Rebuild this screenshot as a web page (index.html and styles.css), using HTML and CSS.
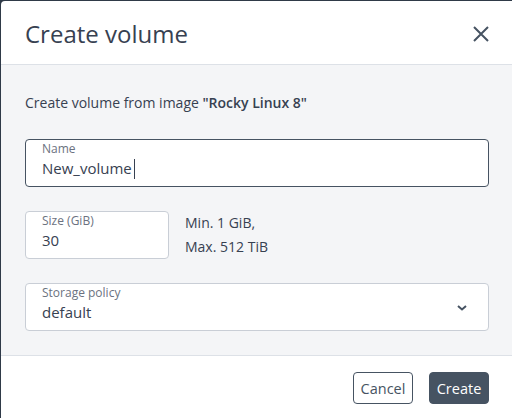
FILE: index.html
```html
<!DOCTYPE html>
<html>
<head>
  <meta charset="UTF-8">
  <title>Create volume</title>
  <link rel="stylesheet" href="styles.css">
</head>
<body>
  <div class="modal">
    <div class="modal-header">
      <h1 class="modal-title">Create volume</h1>
      <button class="close-btn" aria-label="Close">
        <svg width="16" height="16" viewBox="0 0 16 16">
          <path d="M1 1L15 15M15 1L1 15" stroke="#465362" stroke-width="2" fill="none"/>
        </svg>
      </button>
    </div>

    <div class="modal-body">
      <p class="intro">Create volume from image <b>"Rocky Linux 8"</b></p>

      <div class="field field-focused">
        <label class="field-label">Name</label>
        <div class="field-value">New_volume<span class="caret"></span></div>
      </div>

      <div class="size-row">
        <div class="field field-size">
          <label class="field-label">Size (GiB)</label>
          <div class="field-value">30</div>
        </div>
        <div class="hint">
          <div>Min. 1 GiB,</div>
          <div>Max. 512 TiB</div>
        </div>
      </div>

      <div class="field field-select">
        <div>
          <label class="field-label">Storage policy</label>
          <div class="field-value">default</div>
        </div>
        <svg class="chevron" width="10" height="6" viewBox="0 0 10 6">
          <path d="M1 1L5 4.5L9 1" stroke="#465362" stroke-width="2" fill="none"/>
        </svg>
      </div>
    </div>

    <div class="modal-footer">
      <button class="btn btn-outline">Cancel</button>
      <button class="btn btn-primary">Create</button>
    </div>
  </div>
</body>
</html>
```

FILE: styles.css
```css
html, body {
  margin:0; padding:0;
  height:100%;
  overflow:hidden;
}
body {
  background:#2f3a48;
  font-family:"Open Sans", "Noto Sans", sans-serif;
  color:#374151;
}
.modal {
  margin:1px 0 0 1px;
  width:512px;
  background:#fff;
  border-radius:4px 0 0 0;
}
.modal-header {
  display:flex;
  align-items:center;
  justify-content:space-between;
  padding:2px 24px 0 24px;
  box-sizing:border-box;
  border-bottom:1px solid #dde1e7;
  height:64px;
}
.modal-title {
  margin:0;
  font-size:24px;
  font-weight:400;
  color:#374151;
}
.close-btn {
  border:0; background:none; padding:0;
  width:16px; height:16px;
  display:flex;
  cursor:pointer;
}
.modal-body {
  background:#f4f5f7;
  padding:26px 24px 24px;
  border-bottom:1px solid #dde1e7;
}
.intro {
  margin:0 0 24px;
  font-size:14px;
  line-height:24px;
}
.intro b { font-weight:600; }
.field {
  height:48px;
  box-sizing:border-box;
  background:#fff;
  border:1px solid #c9ced6;
  border-radius:4px;
  padding:1px 16px 0;
}
.field-focused { border-color:#465362; }
.field-label {
  display:block;
  font-size:12px;
  line-height:16px;
  color:#6b7280;
}
.field-value {
  font-size:15px;
  line-height:22px;
  color:#374151;
}
.caret {
  display:inline-block;
  width:1px; height:20px;
  background:#374151;
  margin-left:2px;
  vertical-align:-5px;
}
.size-row {
  display:flex;
  margin:24px 0;
}
.field-size { width:144px; }
.hint {
  margin-left:16px;
  font-size:14px;
  line-height:24px;
}
.field-select {
  display:flex;
  align-items:flex-start;
  justify-content:space-between;
  padding-right:21px;
}
.chevron { align-self:center; }
.modal-footer {
  display:flex;
  justify-content:flex-end;
  gap:16px;
  padding:16px 24px;
}
.btn {
  width:60px;
  height:32px;
  padding:0;
  border-radius:4px;
  font-family:inherit;
  font-size:14.5px;
  cursor:pointer;
}
.btn-outline {
  background:#fff;
  border:1px solid #465362;
  color:#465362;
}
.btn-primary {
  background:#465362;
  border:1px solid #465362;
  color:#fff;
}
```
